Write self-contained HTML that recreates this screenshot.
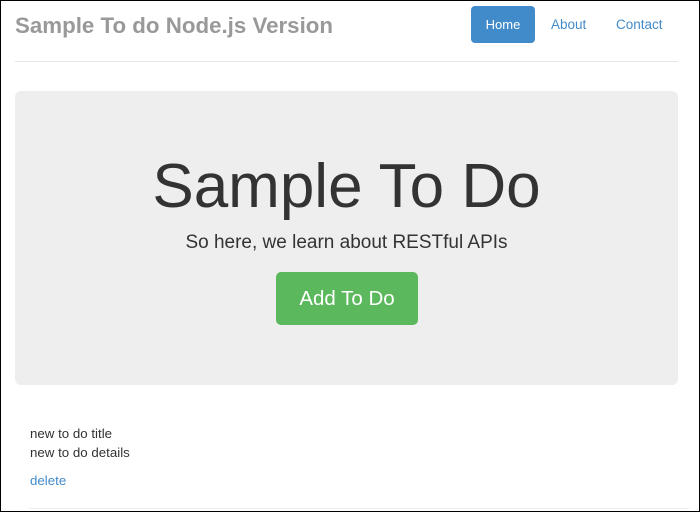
<!DOCTYPE html><html><head><style>
body{margin:0;width:700px;height:512px;overflow:hidden;font-family:"Liberation Sans",Arial,sans-serif;background:#fff}
.f{position:absolute;left:0;top:0;width:698px;height:510px;border:1px solid #000}
.a{position:absolute;white-space:nowrap}
</style></head><body><div class="f"></div>
<div class="a" style="left:15px;top:13px;font-size:22.3px;font-weight:bold;color:#999">Sample To do Node.js Version</div>
<div class="a" style="left:471px;top:6px;width:64px;height:37px;background:#428bca;border-radius:4px;color:#fff;font-size:13px;line-height:37px;text-align:center">Home</div>
<div class="a" style="left:551px;top:17px;font-size:13.5px;color:#428bca">About</div>
<div class="a" style="left:616px;top:17px;font-size:13.5px;color:#428bca">Contact</div>
<div class="a" style="left:15px;top:61px;width:663px;height:1px;background:#e5e5e5"></div>
<div class="a" style="left:15px;top:91px;width:663px;height:294px;background:#eee;border-radius:6px"></div>
<div class="a" style="left:15px;top:152px;width:663px;text-align:center;font-size:62px;color:#333;line-height:70px">Sample To Do</div>
<div class="a" style="left:15px;top:232px;width:663px;text-align:center;font-size:19px;color:#333">So here, we learn about RESTful APIs</div>
<div class="a" style="left:276px;top:272px;width:142px;height:53px;background:#5cb85c;border-radius:5px;color:#fff;font-size:20.5px;line-height:53px;text-align:center">Add To Do</div>
<div class="a" style="left:30px;top:426px;font-size:13.3px;color:#333">new to do title</div>
<div class="a" style="left:30px;top:445px;font-size:13.3px;color:#333">new to do details</div>
<div class="a" style="left:30px;top:473px;font-size:13.3px;color:#428bca">delete</div>
<div class="a" style="left:29px;top:508px;width:660px;height:1px;background:#eee"></div>
</body></html>
